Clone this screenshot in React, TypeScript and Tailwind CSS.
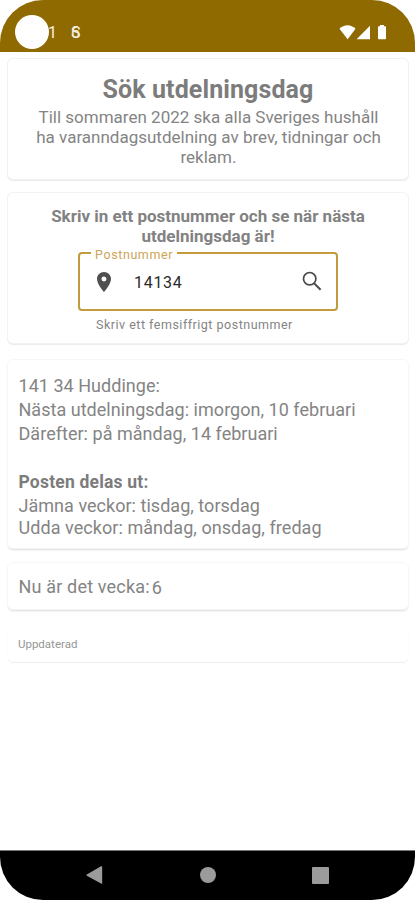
import React from 'react';
import { MdPlace } from 'react-icons/md';

interface CardProps {
  className?: string;
  children: React.ReactNode;
}

const Card: React.FC<CardProps> = ({ className = '', children }) => {
  return (
    <section className={`ml-2 mr-[7px] shrink-0 whitespace-nowrap rounded-[5px] bg-white ${className}`}>
      {children}
    </section>
  );
};

const StatusBar: React.FC = () => {
  return (
    <header className="flex h-[52px] shrink-0 items-start bg-[#8f6a00] pl-[15px] pr-[28px]">
      <div className="mt-[15px] h-[34px] w-[34px] rounded-full bg-white" />
      <span className="-ml-px mt-[25px] text-[16px] leading-[16px] text-[#f6f0e2]">1</span>
      <span className="relative ml-[14px] mt-[25px] text-[16px] leading-[16px] text-[#f6f0e2]">
        6
        <span className="absolute left-0 top-0">S</span>
      </span>
      <div className="ml-auto mt-[25px] flex items-start text-white">
        <svg width="48" height="15" viewBox="0 0 48 15" fill="currentColor">
          <path d="M0.5 3.8C5-.9 12-.9 16.5 3.8L8.6 14.3z" />
          <path d="M31 0.8V14.3H17.6z" />
          <path d="M41 0h4v1.3h1.3q.7 0 .7.7v11.600q0 .7-.7.7h-6.600q-.7 0-.7-.7V2q0-.7.7-.7H41z" />
        </svg>
      </div>
    </header>
  );
};

const PostcodeField: React.FC = () => {
  return (
    <div className="relative mx-auto mt-[6px] flex h-[59px] w-[260px] items-center rounded-[4px] border-2 border-[#c39a3c] pl-[12px] pr-[13px]">
      <label className="absolute -top-[6px] left-[11px] bg-white px-[4px] text-[12.5px] leading-[14px] tracking-[0.6px] text-[#cda456]">
        Postnummer
      </label>
      <MdPlace size={24} className="text-[#4f4f4f]" />
      <span className="ml-[18px] mt-[2px] text-[16px] tracking-[0.7px] text-[#2a2a2a]">14134</span>
      <svg className="ml-auto text-[#484848]" width="21" height="21" viewBox="0 0 21 21" fill="none" stroke="currentColor" strokeWidth="1.7">
        <circle cx="7.700" cy="7.700" r="6.200" />
        <path d="M12.200 12.400l6.400 6.400" strokeWidth="2" />
      </svg>
    </div>
  );
};

const NavigationBar: React.FC = () => {
  return (
    <nav className="mt-auto flex h-[50px] shrink-0 items-center justify-between border-t border-[#777] bg-black pb-px pl-[86px] pr-[86px] text-[#9b9b9b]">
      <svg width="17" height="18" viewBox="0 0 17 18" fill="currentColor">
        <path d="M15 0.300q1.200-.5 1.200.6v16.200q0 1-1.200.5L.8 9.700q-1-.7 0-1.300z" />
      </svg>
      <div className="h-4 w-4 rounded-full bg-[#9b9b9b]" />
      <div className="h-[17px] w-[17px] rounded-[1px] bg-[#9b9b9b]" />
    </nav>
  );
};

const App: React.FC = () => {
  return (
    <div className="h-[900px] w-[415px] bg-white">
      <main className="flex h-full flex-col overflow-hidden rounded-[43px] bg-white font-['Roboto',sans-serif] text-[#848484]">
        <StatusBar />

        <Card className="mt-[7px] h-[120px] pt-[16px] text-center shadow-[0_0_0_1px_#f1f1f1,0_1px_0_1px_#ececec]">
          <h1 className="text-[25px] font-bold leading-[30px] tracking-[0.1px] text-[#7c7c7c]">Sök utdelningsdag</h1>
          <p className="mt-[2px] pl-px text-[17px] leading-[20px]">
            Till sommaren 2022 ska alla Sveriges hushåll
            <br />
            ha varanndagsutdelning av brev, tidningar och
            <br />
            reklam.
          </p>
        </Card>

        <Card className="mt-[14px] h-[150px] pt-[13px] text-center shadow-[0_0_0_1px_#f3f3f3,0_1px_0_1px_#ececec]">
          <h2 className="text-[17px] font-bold leading-[20px] text-[#828282]">
            Skriv in ett postnummer och se när nästa
            <br />
            utdelningsdag är!
          </h2>
          <PostcodeField />
          <p className="ml-[88px] mt-[6px] text-left text-[12.5px] leading-[16px] tracking-[0.5px]">
            Skriv ett femsiffrigt postnummer
          </p>
        </Card>

        <Card className="mt-[17px] h-[188px] pl-[10.500px] pt-[14px] text-[18px] tracking-[0.03px] shadow-[0_0_1px_1px_#f7f7f7,0_2px_2px_0_#d9d9d9]">
          <p className="leading-[24px]">141 34 Huddinge:</p>
          <p className="leading-[24px]">Nästa utdelningsdag: imorgon, 10 februari</p>
          <p className="leading-[24px]">Därefter: på måndag, 14 februari</p>
          <p className="mt-[24px] text-[17.500px] font-bold leading-[24px] tracking-[0.2px] text-[#7c7c7c]">Posten delas ut:</p>
          <p className="leading-[24px]">Jämna veckor: tisdag, torsdag</p>
          <p className="leading-[19px] tracking-[0.06px]">Udda veckor: måndag, onsdag, fredag</p>
        </Card>

        <Card className="mt-[15px] h-[46px] pl-[10.500px] pt-[14px] text-[18px] leading-[20px] tracking-[0.17px] shadow-[0_0_1px_1px_#f7f7f7,0_2px_2px_0_#d9d9d9]">
          Nu är det vecka:<span className="relative top-px ml-[2px]">6</span>
        </Card>

        <Card className="mt-[17px] h-[36px] pl-[10px] pt-[11px] text-[11.5px] leading-[14px] text-[#969696] shadow-[0_1px_1px_0_#ededed,0_0_1px_0_#f3f3f3]">
          Uppdaterad
        </Card>

        <NavigationBar />
      </main>
    </div>
  );
};

export default App;
